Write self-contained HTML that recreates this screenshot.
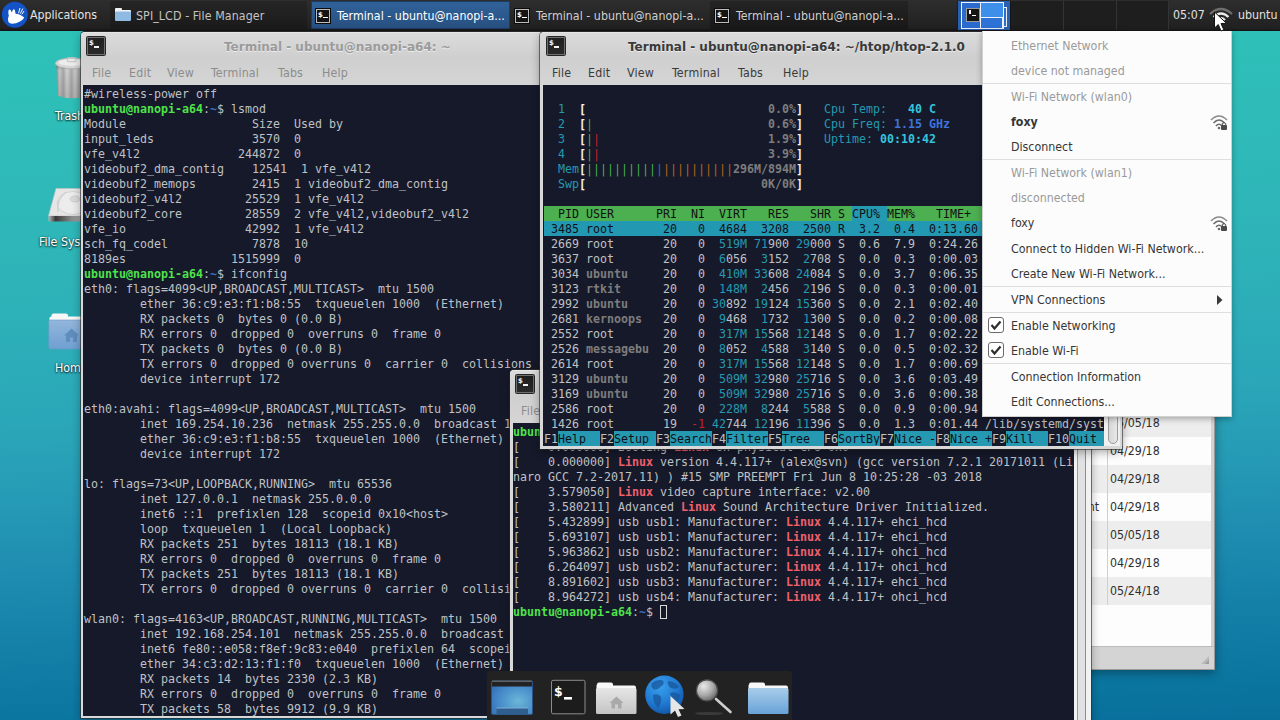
<!DOCTYPE html>
<html lang="en">
<head>
<meta charset="utf-8">
<title>Xfce desktop</title>
<style>
*{box-sizing:border-box;margin:0;padding:0}
html,body{width:1280px;height:720px;overflow:hidden}
body{position:relative;font-family:"DejaVu Sans Condensed","DejaVu Sans","Liberation Sans",sans-serif;font-size:12px;color:#3c3c3c;
background:linear-gradient(178deg,#2dc2b8 4%,#2fbcb8 19%,#2eb3b8 38%,#2aa6b8 56%,#269bb6 65%,#1f8eb1 74%,#1581a9 84%,#0a759f 95%,#086f9b 100%)}
.abs{position:absolute}
/* panel */
#panel{position:absolute;left:0;top:0;width:1280px;height:31px;background:linear-gradient(#2e2e2e 0,#202020 29px,#151515 30px);color:#e2e2e2;font-size:12.3px}
#panel .t{position:absolute;top:1px;line-height:29px;white-space:pre}
.task{position:absolute;top:1px;height:28px}
.tico{position:absolute;top:8px;width:16px;height:16px;background:#151515;border:1px solid #0c0c0c;box-shadow:inset 0 0 0 1px #bdbdbd;color:#fff;font:bold 7px/8px "DejaVu Sans","Liberation Sans",sans-serif}
.tico b{position:absolute;left:2px;top:2px}
.tico:after{content:"";position:absolute;left:7px;top:8px;width:5px;height:1.4px;background:#fff}
/* windows */
.win{position:absolute;background:#d8d8d8;border-radius:4px 4px 0 0;box-shadow:0 -1px 0 0 #2a2a2a,0 0 0 1px rgba(40,40,40,.6),0 3px 10px rgba(0,0,0,.35)}
.tbar{position:absolute;left:0;top:0;right:0;height:26px;border-radius:4px 4px 0 0;background:linear-gradient(#dbdbdb,#cfcfcf);border-top:1px solid #e6e6e6}
.ttl{position:absolute;top:2px;line-height:27px;font-family:"DejaVu Sans","Liberation Sans",sans-serif;font-weight:bold;font-size:12px;white-space:pre;color:#9b9b9b;text-shadow:0 1px 0 rgba(255,255,255,.6)}
.ttl.act{color:#3a3a3a}
.wico{position:absolute;left:5px;top:4px;width:20px;height:20px;background:linear-gradient(#1d1d1d,#2c2c2c);border:1px solid #262626;border-radius:1.5px;box-shadow:inset 0 0 0 1px #6f6f6f;color:#f2f2f2;font:bold 7px/9px "DejaVu Sans","Liberation Sans",sans-serif}
.wico b{position:absolute;left:2px;top:2px}
.wico:after{content:"";position:absolute;left:7px;top:9px;width:5px;height:1.6px;background:#f2f2f2}
.mbar{position:absolute;left:0;top:26px;right:0;height:27px;background:linear-gradient(#cfcfcf,#d5d5d5);color:#8c8c8c;font-size:12.3px}
.mbar.act{color:#3a3a3a}
.mbar span{position:absolute;top:2px;line-height:27px;letter-spacing:.2px;margin-left:-1px}
pre.term{position:absolute;background:#16192a;color:#bfc1c5;font-family:"DejaVu Sans Mono","Liberation Mono",monospace;font-size:11.63px;line-height:15px;white-space:pre;overflow:hidden;letter-spacing:0;padding-top:2px}
pre.term b{font-weight:bold}
.g{color:#4fe34a}.bl{color:#3f6fc0}
.cy{color:#2599b1}.bc{color:#35c3dc}.bb{color:#3e74dc}.w{color:#f2f2f2}.gr{color:#4caf50}.rd{color:#c0222c}.dg{color:#7d7d7d}.or{color:#b5651d}.bu{color:#2d6fc4}
.hd{color:#111}.hc{color:#111}.sel{color:#101018}
.fk{color:#101018}
.st{position:absolute;height:15px}
.lr{color:#f0606a}
/* menu */
#nm{position:absolute;left:982px;top:31px;width:250px;height:386px;background:#fcfcfc;border:1px solid #d0d0d0;border-top:none;box-shadow:0 2px 6px rgba(0,0,0,.3);font-size:12.3px;color:#363636}
#nm div.i{position:absolute;left:28px;line-height:25px;height:25px;white-space:pre}
#nm div.d{color:#9a9a9a}
#nm div.s{position:absolute;left:0;right:0;height:1px;background:#dedede}
</style>
</head>
<body>
<!-- desktop icons -->
<svg class="abs" style="left:48px;top:54px" width="48" height="48" viewBox="0 0 48 48">
 <defs>
  <linearGradient id="tr1" x1="0" x2="1"><stop offset="0" stop-color="#8f8f8f"/><stop offset=".1" stop-color="#c6c6c6"/><stop offset=".22" stop-color="#a6a6a6"/><stop offset=".34" stop-color="#d2d2d2"/><stop offset=".48" stop-color="#a9a9a9"/><stop offset=".6" stop-color="#cdcdcd"/><stop offset=".74" stop-color="#a2a2a2"/><stop offset=".88" stop-color="#bebebe"/><stop offset="1" stop-color="#7f7f7f"/></linearGradient>
  <linearGradient id="tr2" x1="0" y1="0" x2="0" y2="1"><stop offset="0" stop-color="#333" stop-opacity=".35"/><stop offset=".15" stop-color="#333" stop-opacity="0"/><stop offset="1" stop-color="#444" stop-opacity=".18"/></linearGradient>
 </defs>
 <path d="M8.500 11 L39.500 11 L38.800 41.500 Q24 47 9.200 41.500 Z" fill="url(#tr1)"/>
 <path d="M8.500 11 L39.500 11 L38.800 41.500 Q24 47 9.200 41.500 Z" fill="url(#tr2)"/>
 <ellipse cx="24" cy="9.300" rx="16.600" ry="5.400" fill="#d6d6d6" stroke="#b4b4b4" stroke-width=".8"/>
 <ellipse cx="24" cy="8.400" rx="13.500" ry="3.500" fill="#ececec"/>
 <rect x="19.500" y="3.800" width="8.500" height="3.800" rx="1.200" fill="none" stroke="#c9c9c9" stroke-width="1.300"/>
</svg>
<div class="abs" style="left:55px;top:109px;color:#fff;font-size:12.3px;text-shadow:0 1px 2px rgba(0,0,0,.9),0 0 2px rgba(0,0,0,.5);white-space:pre">Trash</div>
<svg class="abs" style="left:48px;top:182px" width="48" height="48" viewBox="0 0 48 48">
 <defs><linearGradient id="hd1" x1="0" x2="1"><stop offset="0" stop-color="#b9b9b9"/><stop offset=".15" stop-color="#3a3a3a"/><stop offset=".5" stop-color="#8a8a8a"/><stop offset="1" stop-color="#c6c6c6"/></linearGradient></defs>
 <path d="M8 6.500 L41 6.500 L47.500 34 L.5 34 Z" fill="#e6e6e6" stroke="#c2c2c2" stroke-width=".7"/>
 <path d="M.5 34 L47.500 34 L47.500 38 Q47.500 39.500 46 39.500 L2 39.500 Q.5 39.500 .5 38 Z" fill="url(#hd1)"/>
 <ellipse cx="25" cy="21" rx="16" ry="11.500" fill="#ececec" stroke="#d2d2d2" stroke-width="1"/>
 <ellipse cx="27" cy="17" rx="5" ry="3" fill="#dadada" stroke="#c8c8c8" stroke-width=".8"/>
 <path d="M10 30 Q8 18 18 10" stroke="#d0d0d0" stroke-width="1.500" fill="none"/>
</svg>
<div class="abs" style="left:39px;top:235px;color:#fff;font-size:12.3px;text-shadow:0 1px 2px rgba(0,0,0,.9),0 0 2px rgba(0,0,0,.5);white-space:pre">File System</div>
<svg class="abs" style="left:48px;top:309px" width="48" height="48" viewBox="0 0 48 48">
 <defs><linearGradient id="hf1" x1="0" y1="0" x2="0" y2="1"><stop offset="0" stop-color="#93b6dc"/><stop offset="1" stop-color="#6f9fd2"/></linearGradient></defs>
 <path d="M3.500 6.500 Q3.500 4.500 5.500 4.500 L18 4.500 Q20 4.500 20 6.500 L20 7.500 L45 7.500 Q47 7.500 47 9.500 L47 13 L1.500 13 L1.500 9 Q1.500 7.500 3.500 7.500 Z" fill="#f7f7f7"/>
 <rect x=".8" y="11" width="46.700" height="29" rx="1.500" fill="url(#hf1)" stroke="#6e99c6" stroke-width=".6"/>
 <path d="M23.500 19.500 L31 26.500 L29 26.500 L29 33 L25 33 L25 28.500 L22 28.500 L22 33 L18 33 L18 26.500 L16 26.500 Z" fill="#5f8dbd"/>
</svg>
<div class="abs" style="left:55px;top:361px;color:#fff;font-size:12.3px;text-shadow:0 1px 2px rgba(0,0,0,.9),0 0 2px rgba(0,0,0,.5);white-space:pre">Home</div>

<!-- top panel -->
<div id="panel">
 <svg class="abs" style="left:1px;top:1px" width="28" height="28" viewBox="0 0 28 28">
  <circle cx="13.900" cy="13.700" r="13" fill="#1353c6"/>
  <path d="M7.500 9.500 Q8.200 7.600 9.600 9 L10.800 11.500 L11.800 9 Q13 7.400 13.900 9.300 L14.600 12.800 Q19 12.800 23.200 16.600 Q21.500 20.500 15 22.200 Q9 23.500 7.400 21 Q6.500 17.500 7.800 14.500 Q7 12 7.500 9.500 Z" fill="#fff"/>
  <path d="M17.600 12.200 L19 7 M19.300 12.600 L21.800 7.600 M20.800 13.400 L23 10" stroke="#fff" stroke-width="1" fill="none"/>
 </svg>
 <span class="t" style="left:30px;letter-spacing:-.05px">Applications</span>
 <div class="task" style="left:110px;width:197px;background:linear-gradient(#262626,#1a1a1a)"></div>
 <svg class="abs" style="left:114px;top:7px" width="18" height="15" viewBox="0 0 18 15">
  <path d="M1 2 Q1 1 2 1 L7 1 Q8 1 8 2 L8 3 L16 3 Q17 3 17 4 L17 6 L1 6 Z" fill="#f2f2f2"/>
  <rect x="1" y="4.5" width="16" height="9.5" rx="1" fill="#8fbbe3"/>
 </svg>
 <span class="t" style="left:136px;color:#c4c4c4;margin-top:1px;letter-spacing:.09px">SPI_LCD - File Manager</span>
 <div class="task" style="left:311px;width:199px;background:linear-gradient(#30639b,#284f80);border-radius:2px;box-shadow:inset 0 0 0 1px #1c3c66"></div>
 <div class="tico" style="left:315px"><b>$</b></div>
 <span class="t" style="left:337px;color:#fff;margin-top:1px;letter-spacing:.03px">Terminal - ubuntu@nanopi-a...</span>
 <div class="tico" style="left:514px"><b>$</b></div>
 <span class="t" style="left:536px;color:#cfcfcf;margin-top:1px;letter-spacing:.03px">Terminal - ubuntu@nanopi-a...</span>
 <div class="task" style="left:710px;width:198px;background:linear-gradient(#242424,#181818)"></div>
 <div class="tico" style="left:714px"><b>$</b></div>
 <span class="t" style="left:736px;color:#cfcfcf;margin-top:1px;letter-spacing:.03px">Terminal - ubuntu@nanopi-a...</span>
 <!-- pager -->
 <div class="abs" style="left:957px;top:1px;width:212px;height:29px;background:#1e1e1e"></div>
 <div class="abs" style="left:958px;top:1px;width:52px;height:29px;background:#2a5fb2"></div>
 <div class="abs" style="left:1003px;top:7px;width:4px;height:20px;background:#2c6dd0;border:1px solid #e9eefa;border-left:none"></div>
 <div class="abs" style="left:961px;top:2px;width:43px;height:27px;background:#2b6bd0;border:1px solid #eef2fb"></div>
 <div class="abs" style="left:980px;top:2px;width:24px;height:16px;background:#3e8fe9;border:1px solid #eef2fb"></div>
 <div class="abs" style="left:980px;top:17px;width:23px;height:12px;background:#2d73d6;border:1px solid #eef2fb"></div>
 <div class="abs" style="left:966px;top:8px;width:14px;height:14px;background:#151515;border:1px solid #9a9a9a"></div>
 <div class="abs" style="left:969px;top:10px;width:2px;height:4px;background:#fff"></div>
 <div class="abs" style="left:972px;top:15px;width:4px;height:1px;background:#fff"></div>
 <div class="abs" style="left:1010px;top:1px;width:1px;height:29px;background:#161616"></div>
 <div class="abs" style="left:1063px;top:1px;width:1px;height:29px;background:#343434"></div>
 <div class="abs" style="left:1116px;top:1px;width:1px;height:29px;background:#343434"></div>
 <div class="abs" style="left:1168px;top:1px;width:1px;height:29px;background:#343434"></div>
 <span class="t" style="left:1173px">05:07</span>
 <svg class="abs" style="left:1208px;top:6px" width="26" height="18" viewBox="0 0 26 18">
  <path d="M2 8 Q13 -2 24 8" stroke="#6e6e6e" stroke-width="2.2" fill="none"/>
  <path d="M5.5 11 Q13 4 20.5 11" stroke="#e8e8e8" stroke-width="2.2" fill="none"/>
  <path d="M9 14 Q13 10 17 14" stroke="#e8e8e8" stroke-width="2.2" fill="none"/>
  <circle cx="13" cy="16.3" r="1.6" fill="#e8e8e8"/>
 </svg>
 <span class="t" style="left:1238px">ubuntu</span>
</div>
<!-- file manager (back) -->
<div class="abs" style="left:700px;top:300px;width:515px;height:370px;background:#fdfdfd;border:1px solid #9a9a9a;box-shadow:0 3px 10px rgba(0,0,0,.35);font-size:12.3px;color:#2e2e2e">
 <div class="abs" style="left:380px;top:108px;width:131px;height:28px;background:#ededed"></div>
 <div class="abs" style="left:380px;top:164px;width:131px;height:28px;background:#ededed"></div>
 <div class="abs" style="left:380px;top:220px;width:131px;height:28px;background:#ededed"></div>
 <div class="abs" style="left:380px;top:276px;width:131px;height:28px;background:#ededed"></div>
 <div class="abs" style="left:406px;top:108px;width:1px;height:196px;background:#cfcfcf"></div>
 <div class="abs" style="left:510px;top:0;width:3px;height:346px;background:#d2d2d2"></div>
 <div class="abs" style="left:409px;top:108px;line-height:28px;white-space:pre">05/05/18
04/29/18
04/29/18
04/29/18
05/05/18
04/29/18
05/24/18</div>
 <div class="abs" style="left:380px;top:192px;width:18px;line-height:28px;text-align:right;white-space:pre">nt</div>
 <div class="abs" style="left:0;top:345px;width:513px;height:23px;background:#d4d4d4;border-top:1px solid #bcbcbc"></div>
 <svg class="abs" style="left:497px;top:352px" width="12" height="12" viewBox="0 0 12 12"><path d="M11 3 L11 11 L3 11 Z" fill="#bcbcbc"/><path d="M11 6.500 L11 11 L6.500 11 Z" fill="#a0a0a0"/></svg>
</div>

<!-- window 1 : terminal ~ -->
<div class="win" style="left:81px;top:32px;width:580px;height:686px">
 <div class="tbar"></div>
 <div class="wico"><b>$</b></div>
 <div class="ttl" style="left:143px">Terminal - ubuntu@nanopi-a64: ~</div>
 <div class="mbar"><span style="left:12px">File</span><span style="left:49px">Edit</span><span style="left:87px">View</span><span style="left:131px">Terminal</span><span style="left:198px">Tabs</span><span style="left:242px">Help</span></div>
<pre class="term" style="left:2px;top:53px;width:575px;height:631px;padding-left:1px">#wireless-power off
<b class="g">ubuntu@nanopi-a64</b>:<b class="bl">~</b>$ lsmod
Module                  Size  Used by
input_leds              3570  0
vfe_v4l2              244872  0
videobuf2_dma_contig    12541  1 vfe_v4l2
videobuf2_memops        2415  1 videobuf2_dma_contig
videobuf2_v4l2         25529  1 vfe_v4l2
videobuf2_core         28559  2 vfe_v4l2,videobuf2_v4l2
vfe_io                 42992  1 vfe_v4l2
sch_fq_codel            7878  10
8189es               1515999  0
<b class="g">ubuntu@nanopi-a64</b>:<b class="bl">~</b>$ ifconfig
eth0: flags=4099&lt;UP,BROADCAST,MULTICAST&gt;  mtu 1500
        ether 36:c9:e3:f1:b8:55  txqueuelen 1000  (Ethernet)
        RX packets 0  bytes 0 (0.0 B)
        RX errors 0  dropped 0  overruns 0  frame 0
        TX packets 0  bytes 0 (0.0 B)
        TX errors 0  dropped 0 overruns 0  carrier 0  collisions 0
        device interrupt 172

eth0:avahi: flags=4099&lt;UP,BROADCAST,MULTICAST&gt;  mtu 1500
        inet 169.254.10.236  netmask 255.255.0.0  broadcast 169.254.255.255
        ether 36:c9:e3:f1:b8:55  txqueuelen 1000  (Ethernet)
        device interrupt 172

lo: flags=73&lt;UP,LOOPBACK,RUNNING&gt;  mtu 65536
        inet 127.0.0.1  netmask 255.0.0.0
        inet6 ::1  prefixlen 128  scopeid 0x10&lt;host&gt;
        loop  txqueuelen 1  (Local Loopback)
        RX packets 251  bytes 18113 (18.1 KB)
        RX errors 0  dropped 0  overruns 0  frame 0
        TX packets 251  bytes 18113 (18.1 KB)
        TX errors 0  dropped 0 overruns 0  carrier 0  collisions 0

wlan0: flags=4163&lt;UP,BROADCAST,RUNNING,MULTICAST&gt;  mtu 1500
        inet 192.168.254.101  netmask 255.255.0.0  broadcast 192.168.255.255
        inet6 fe80::e058:f8ef:9c83:e040  prefixlen 64  scopeid 0x20&lt;link&gt;
        ether 34:c3:d2:13:f1:f0  txqueuelen 1000  (Ethernet)
        RX packets 14  bytes 2330 (2.3 KB)
        RX errors 0  dropped 0  overruns 0  frame 0
        TX packets 58  bytes 9912 (9.9 KB)
</pre>
</div>
<!-- window 3 : dmesg -->
<div class="win" style="left:510px;top:370px;width:581px;height:360px">
 <div class="tbar"></div>
 <div class="wico"><b>$</b></div>
 <div class="ttl" style="left:143px">Terminal - ubuntu@nanopi-a64: ~</div>
 <div class="mbar"><span style="left:12px">File</span><span style="left:49px">Edit</span><span style="left:87px">View</span><span style="left:131px">Terminal</span><span style="left:198px">Tabs</span><span style="left:242px">Help</span></div>
 <div class="abs" style="left:563px;top:53px;width:18px;height:307px;background:#f2f2f2"></div>
 <div class="abs" style="left:567px;top:53px;width:1px;height:307px;background:#9c9c9c"></div>
 <div class="abs" style="left:568px;top:53px;width:7px;height:307px;background:#e1e1e1"></div>
 <div class="abs" style="left:575px;top:53px;width:1px;height:307px;background:#8c8c8c"></div>
<pre class="term" style="left:3px;top:53px;width:560.500px;height:307px"><b class="g">ubuntu@nanopi-a64</b>:<b class="bl">~</b>$ dmesg | grep Linux
[    0.000000] Booting <b class="lr">Linux</b> on physical CPU 0x0
[    0.000000] <b class="lr">Linux</b> version 4.4.117+ (alex@svn) (gcc version 7.2.1 20171011 (Li
naro GCC 7.2-2017.11) ) #15 SMP PREEMPT Fri Jun 8 10:25:28 -03 2018
[    3.579050] <b class="lr">Linux</b> video capture interface: v2.00
[    3.580211] Advanced <b class="lr">Linux</b> Sound Architecture Driver Initialized.
[    5.432899] usb usb1: Manufacturer: <b class="lr">Linux</b> 4.4.117+ ehci_hcd
[    5.693107] usb usb1: Manufacturer: <b class="lr">Linux</b> 4.4.117+ ehci_hcd
[    5.963862] usb usb2: Manufacturer: <b class="lr">Linux</b> 4.4.117+ ohci_hcd
[    6.264097] usb usb2: Manufacturer: <b class="lr">Linux</b> 4.4.117+ ohci_hcd
[    8.891602] usb usb3: Manufacturer: <b class="lr">Linux</b> 4.4.117+ ehci_hcd
[    8.964272] usb usb4: Manufacturer: <b class="lr">Linux</b> 4.4.117+ ohci_hcd
<b class="g">ubuntu@nanopi-a64</b>:<b class="bl">~</b>$ <span style="outline:1px solid #d8d8d8;outline-offset:-1px"> </span>
</pre>
</div>
<!-- window 2 : htop -->
<div class="win" style="left:540px;top:32px;width:582px;height:417px">
 <div class="tbar"></div>
 <div class="mbar" style="color:transparent"></div>
 <div class="abs" style="left:1px;top:0;width:581px;height:417px">
 <div class="wico"><b>$</b></div>
 <div class="ttl act" style="left:87px">Terminal - ubuntu@nanopi-a64: ~/htop/htop-2.1.0</div>
 <div class="mbar act"><span style="left:12px">File</span><span style="left:48px">Edit</span><span style="left:87px">View</span><span style="left:132px">Terminal</span><span style="left:198px">Tabs</span><span style="left:243px">Help</span></div>
 <div class="abs" style="left:563px;top:53px;width:16px;height:361px;background:#f0f0f0"></div>
 <div class="abs" style="left:567px;top:377px;width:10px;height:35px;border:1px solid #9c9c9c;border-radius:5px;background:linear-gradient(90deg,#d6d6d6,#e8e8e8)"></div>
 <div class="abs" style="left:2px;top:53px;width:561px;height:361px;background:#16192a"></div>
 <div class="st" style="left:3px;top:174px;width:560px;background:#4caf50"></div>
 <div class="st" style="left:311px;top:174px;width:35px;background:#2599b1"></div>
 <div class="st" style="left:3px;top:189px;width:560px;background:#2398b2"></div>
 <div class="st" style="left:17px;top:399px;width:42px;background:#2599b1"></div>
 <div class="st" style="left:73px;top:399px;width:42px;background:#2599b1"></div>
 <div class="st" style="left:129px;top:399px;width:42px;background:#2599b1"></div>
 <div class="st" style="left:185px;top:399px;width:42px;background:#2599b1"></div>
 <div class="st" style="left:241px;top:399px;width:42px;background:#2599b1"></div>
 <div class="st" style="left:297px;top:399px;width:42px;background:#2599b1"></div>
 <div class="st" style="left:353px;top:399px;width:42px;background:#2599b1"></div>
 <div class="st" style="left:409px;top:399px;width:42px;background:#2599b1"></div>
 <div class="st" style="left:465px;top:399px;width:42px;background:#2599b1"></div>
 <div class="st" style="left:528px;top:399px;width:35px;background:#2599b1"></div>
<pre class="term" style="left:3px;top:53px;width:560px;height:360px;background:transparent">

  <span class="cy">1</span>  <b class="w">[</b>                          <b class="dg">0.0%</b><b class="w">]</b>   <span class="cy">Cpu Temp: </span>  <b class="bc">40 C</b>
  <span class="cy">2</span>  <b class="w">[</b><span class="gr">|</span>                         <b class="dg">0.6%</b><b class="w">]</b>   <span class="cy">Cpu Freq: </span><b class="bb">1.15 GHz</b>
  <span class="cy">3</span>  <b class="w">[</b><span class="gr">|</span><span class="rd">|</span>                        <b class="dg">1.9%</b><b class="w">]</b>   <span class="cy">Uptime: </span><b class="bc">00:10:42</b>
  <span class="cy">4</span>  <b class="w">[</b><span class="gr">|</span><span class="rd">|</span>                        <b class="dg">3.9%</b><b class="w">]</b>   
  <span class="cy">Mem</span><b class="w">[</b><span class="gr">||||||||||</span><span class="bu">|</span><span class="or">||||||||||</span><b class="dg">296M/894M</b><b class="w">]</b>
  <span class="cy">Swp</span><b class="w">[</b>                         <b class="dg">0K/0K</b><b class="w">]</b>

<span class="hd">  PID USER      PRI  NI  VIRT   RES   SHR S <span class="hc">CPU% </span>MEM%   TIME+  Command          </span>
<span class="sel"> 3485 root       20   0  4684  3208  2500 R  3.2  0.4  0:13.60 htop             </span>
 2669 root       20   0  <span class="cy">519M</span> <span class="cy">71</span>900 <span class="cy">29</span>000 S  0.6  7.9  0:24.26 /usr/lib/xorg/Xor
 3637 root       20   0  <span class="cy">6</span>056  <span class="cy">3</span>152  <span class="cy">2</span>708 S  0.0  0.3  0:00.03 sshd: ubuntu [pri
 3034 <b class="dg">ubuntu</b>     20   0  <span class="cy">410M</span> <span class="cy">33</span>608 <span class="cy">24</span>084 S  0.0  3.7  0:06.35 xfwm4 --replace
 3123 <b class="dg">rtkit</b>      20   0  <span class="cy">148M</span>  <span class="cy">2</span>456  <span class="cy">2</span>196 S  0.0  0.3  0:00.01 /usr/lib/rtkit/rt
 2992 <b class="dg">ubuntu</b>     20   0 <span class="cy">30</span>892 <span class="cy">19</span>124 <span class="cy">15</span>360 S  0.0  2.1  0:02.40 xfce4-session
 2681 <b class="dg">kernoops</b>   20   0  <span class="cy">9</span>468  <span class="cy">1</span>732  <span class="cy">1</span>300 S  0.0  0.2  0:00.08 /usr/sbin/kernelo
 2552 root       20   0  <span class="cy">317M</span> <span class="cy">15</span>568 <span class="cy">12</span>148 S  0.0  1.7  0:02.22 /usr/sbin/Network
 2526 <b class="dg">messagebu</b>  20   0  <span class="cy">8</span>052  <span class="cy">4</span>588  <span class="cy">3</span>140 S  0.0  0.5  0:02.32 /usr/bin/dbus-dae
 2614 root       20   0  <span class="cy">317M</span> <span class="cy">15</span>568 <span class="cy">12</span>148 S  0.0  1.7  0:00.69 /usr/sbin/Network
 3129 <b class="dg">ubuntu</b>     20   0  <span class="cy">509M</span> <span class="cy">32</span>980 <span class="cy">25</span>716 S  0.0  3.6  0:03.49 xfce4-terminal
 3169 <b class="dg">ubuntu</b>     20   0  <span class="cy">509M</span> <span class="cy">32</span>980 <span class="cy">25</span>716 S  0.0  3.6  0:00.38 xfce4-terminal
 2586 root       20   0  <span class="cy">228M</span>  <span class="cy">8</span>244  <span class="cy">5</span>588 S  0.0  0.9  0:00.94 /usr/sbin/lightdm
 1426 root       19  <span class="rd">-1</span> <span class="cy">42</span>744 <span class="cy">12</span>196 <span class="cy">11</span>396 S  0.0  1.3  0:01.44 /lib/systemd/syst
F1<span class="fk">Help  </span>F2<span class="fk">Setup </span>F3<span class="fk">Search</span>F4<span class="fk">Filter</span>F5<span class="fk">Tree  </span>F6<span class="fk">SortBy</span>F7<span class="fk">Nice -</span>F8<span class="fk">Nice +</span>F9<span class="fk">Kill  </span>F10<span class="fk">Quit </span>
</pre>
</div>
</div>
<!-- dock -->
<div class="abs" style="left:487px;top:671px;width:305px;height:49px;background:#222;border-radius:3px 3px 0 0">
 <svg class="abs" style="left:0;top:0" width="305" height="49" viewBox="0 0 305 49">
  <defs>
   <radialGradient id="sd1" cx=".65" cy=".6" r=".75"><stop offset="0" stop-color="#6cb6d6"/><stop offset=".55" stop-color="#4a90cc"/><stop offset="1" stop-color="#3570b8"/></radialGradient>
   <linearGradient id="gf1" x1="0" y1="0" x2="0" y2="1"><stop offset="0" stop-color="#e6e6e6"/><stop offset="1" stop-color="#c4c4c4"/></linearGradient>
   <linearGradient id="bf1" x1="0" y1="0" x2="0" y2="1"><stop offset="0" stop-color="#a9cdea"/><stop offset="1" stop-color="#68a2d8"/></linearGradient>
   <radialGradient id="gl1" cx=".38" cy=".28" r=".8"><stop offset="0" stop-color="#3aa0ee"/><stop offset=".6" stop-color="#1f78d0"/><stop offset="1" stop-color="#114f9e"/></radialGradient>
   <radialGradient id="mg1" cx=".35" cy=".3" r=".8"><stop offset="0" stop-color="#e9e9e9"/><stop offset=".55" stop-color="#a8a8a8"/><stop offset="1" stop-color="#5a5a5a"/></radialGradient>
  </defs>
  <!-- show desktop -->
  <rect x="4.500" y="10" width="41" height="33.500" rx="1.500" fill="url(#sd1)" stroke="#2b5588" stroke-width="1"/>
  <rect x="5" y="10" width="40" height="5.500" fill="#232323"/>
  <rect x="5" y="9.700" width="40" height="1" fill="#7d7d7d"/>
  <rect x="9.500" y="37" width="31.500" height="6.500" fill="#305e8e"/>
  <rect x="9.500" y="36.500" width="31.500" height="1" fill="#7fb0d8"/>
  <!-- terminal -->
  <rect x="64.500" y="9.300" width="33.500" height="33.500" rx="1.500" fill="#1c1c1c" stroke="#8c8c8c" stroke-width="1"/>
  <text x="67" y="25" font-family="DejaVu Sans, sans-serif" font-weight="bold" font-size="12.500" fill="#fff">$</text>
  <rect x="77" y="26" width="8" height="2.600" fill="#fff"/>
  <!-- home folder -->
  <path d="M110 13.500 Q110 11.500 112 11.500 L124 11.500 Q126 11.500 126 13.500 L126 14.500 L147 14.500 Q149 14.500 149 16.500 L149 19 L109.500 19 L109.500 15 Q109.500 13.500 110 13.500 Z" fill="#f8f8f8"/>
  <rect x="109" y="17" width="40.500" height="26" rx="1.500" fill="url(#gf1)"/>
  <path d="M129.500 25.500 L136.500 32 L134.500 32 L134.500 37.500 L131 37.500 L131 33.500 L128 33.500 L128 37.500 L124.500 37.500 L124.500 32 L122.500 32 Z" fill="#a9a9a9"/>
  <!-- globe -->
  <circle cx="177.400" cy="23.700" r="19.200" fill="url(#gl1)"/>
  <path d="M165 12 Q170 8 176 9.500 Q178 13 174 15.500 Q171 19 167 18.500 Q163 16 165 12 Z M181 10 Q188 10 192 16 Q189 19 184 17 Q180 14 181 10 Z M166 24 Q171 22 174 26 Q175 32 171 37 Q166 32 166 24 Z M183 22 Q189 20 193 24 Q193 30 188 33 Q184 28 183 22 Z" fill="#18569a" opacity=".75"/>
  <path d="M183.500 25 L183.500 43.500 L188 39.500 L191 46 L194.500 44.500 L191.500 38.200 L197.500 38 Z" fill="#e6e6e6"/>
  <!-- magnifier -->
  <ellipse cx="222" cy="42.500" rx="14" ry="1.600" fill="#3a3a3a"/>
  <path d="M229 28 L243.500 41" stroke="#cfcfcf" stroke-width="2.600" stroke-linecap="round"/>
  <circle cx="220" cy="19.400" r="10.600" fill="url(#mg1)" stroke="#4c4c4c" stroke-width="1.200"/>
  <!-- folder -->
  <path d="M262 13.500 Q262 11.500 264 11.500 L276 11.500 Q278 11.500 278 13.500 L278 14.500 L299 14.500 Q301 14.500 301 16.500 L301 19 L261.500 19 L261.500 15 Q261.500 13.500 262 13.500 Z" fill="#f8f8f8"/>
  <rect x="261" y="17" width="40.500" height="26" rx="1.500" fill="url(#bf1)"/>
 </svg>
</div>

<!-- network manager menu -->
<div id="nm">
 <div class="i d" style="top:3px">Ethernet Network</div>
 <div class="i d" style="top:28px">device not managed</div>
 <div class="s" style="top:52px"></div>
 <div class="i d" style="top:54px">Wi-Fi Network (wlan0)</div>
 <div class="i" style="top:79px;font-weight:bold">foxy</div>
 <div class="i" style="top:104px">Disconnect</div>
 <div class="s" style="top:128px"></div>
 <div class="i d" style="top:130px">Wi-Fi Network (wlan1)</div>
 <div class="i d" style="top:155px">disconnected</div>
 <div class="i" style="top:180px">foxy</div>
 <div class="i" style="top:206px">Connect to Hidden Wi-Fi Network...</div>
 <div class="i" style="top:231px">Create New Wi-Fi Network...</div>
 <div class="s" style="top:255px"></div>
 <div class="i" style="top:257px">VPN Connections</div>
 <div class="s" style="top:281px"></div>
 <div class="i" style="top:283px">Enable Networking</div>
 <div class="i" style="top:308px">Enable Wi-Fi</div>
 <div class="s" style="top:332px"></div>
 <div class="i" style="top:334px">Connection Information</div>
 <div class="i" style="top:359px">Edit Connections...</div>
 <svg class="abs" style="left:233px;top:263px" width="7" height="12" viewBox="0 0 7 12"><path d="M1 1 L6.500 6 L1 11 Z" fill="#3a3a3a"/></svg>
 <svg class="abs" style="left:5px;top:286px" width="16" height="16" viewBox="0 0 16 16"><rect x=".5" y=".5" width="15" height="15" rx="2.5" fill="#fff" stroke="#6a6a6a"/><path d="M3.500 8 L6.500 11.500 L12.500 4.500" stroke="#2e2e2e" stroke-width="2.2" fill="none"/></svg>
 <svg class="abs" style="left:5px;top:311px" width="16" height="16" viewBox="0 0 16 16"><rect x=".5" y=".5" width="15" height="15" rx="2.5" fill="#fff" stroke="#6a6a6a"/><path d="M3.500 8 L6.500 11.500 L12.500 4.500" stroke="#2e2e2e" stroke-width="2.2" fill="none"/></svg>
 <svg class="abs" style="left:227px;top:83px" width="18" height="17" viewBox="0 0 18 17">
  <path d="M1 6 Q9 -2 17 6" stroke="#8a8a8a" stroke-width="1.6" fill="none"/>
  <path d="M3.500 9 Q9 3 14.500 9" stroke="#6a6a6a" stroke-width="1.6" fill="none"/>
  <path d="M6 12 Q9 8.500 12 12" stroke="#6a6a6a" stroke-width="1.6" fill="none"/>
  <circle cx="9" cy="14" r="1.3" fill="#6a6a6a"/>
  <rect x="11" y="11" width="6" height="5" rx="1" fill="#4a4a4a"/><path d="M12.300 11 V9.500 Q14 7.800 15.700 9.500 V11" stroke="#4a4a4a" stroke-width="1" fill="none"/>
 </svg>
 <svg class="abs" style="left:227px;top:184px" width="18" height="17" viewBox="0 0 18 17">
  <path d="M1 6 Q9 -2 17 6" stroke="#8a8a8a" stroke-width="1.6" fill="none"/>
  <path d="M3.500 9 Q9 3 14.500 9" stroke="#6a6a6a" stroke-width="1.6" fill="none"/>
  <path d="M6 12 Q9 8.500 12 12" stroke="#6a6a6a" stroke-width="1.6" fill="none"/>
  <circle cx="9" cy="14" r="1.3" fill="#6a6a6a"/>
  <rect x="11" y="11" width="6" height="5" rx="1" fill="#4a4a4a"/><path d="M12.300 11 V9.500 Q14 7.800 15.700 9.500 V11" stroke="#4a4a4a" stroke-width="1" fill="none"/>
 </svg>
</div>
<!-- mouse cursor -->
<svg class="abs" style="left:1213px;top:11px" width="16" height="22" viewBox="0 0 16 22"><path d="M1.500 1 L1.500 17 L5.300 13.500 L8 20 L10.800 18.800 L8 12.500 L13.500 12.300 Z" fill="#fff" stroke="#111" stroke-width="1"/></svg>

</body>
</html>
